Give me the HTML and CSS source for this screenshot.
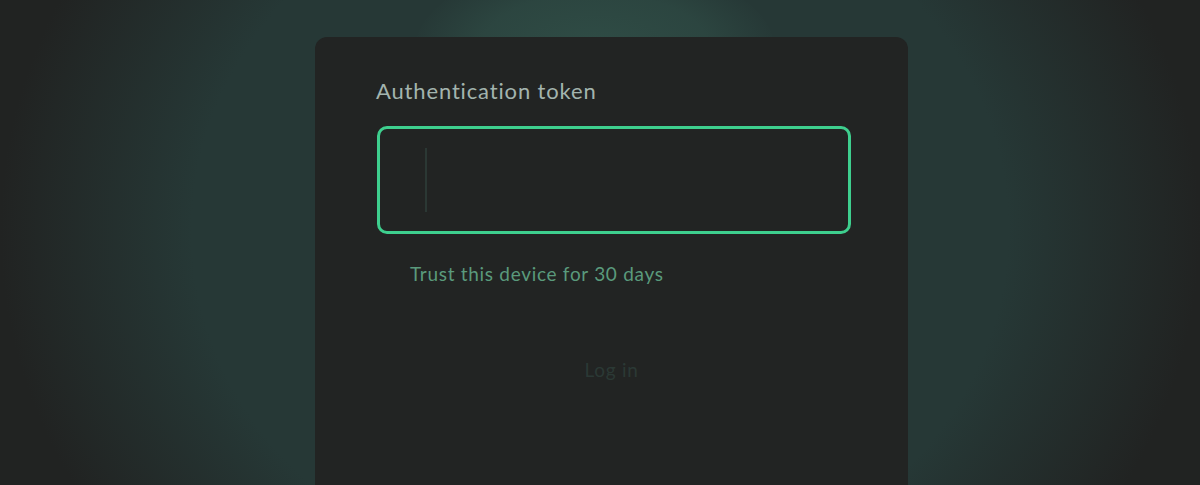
FILE: index.html
```html
<!DOCTYPE html>
<html lang="en">
<head>
<meta charset="utf-8">
<title>Authentication</title>
<link rel="stylesheet" href="styles.css">
</head>
<body>
<div class="page">
  <div class="glow"></div>
  <main class="card">
    <label class="label" for="token">Authentication token</label>
    <div class="input">
      <span class="caret"></span>
    </div>
    <div class="trust">Trust this device for 30 days</div>
    <button class="login">Log in</button>
  </main>
</div>
</body>
</html>
```

FILE: styles.css
```css
html, body {
  margin: 0;
  padding: 0;
  height: 100%;
  overflow: hidden;
}
body {
  background-color: #212322;
  background-image: radial-gradient(ellipse 600px 530px at 600px 230px, #263836 0%, #263836 68%, #212322 100%);
  font-family: "Lato", "Noto Sans", sans-serif;
}
.page {
  position: relative;
  display: flex;
  justify-content: center;
  padding-top: 37px;
  padding-left: 23px;
  height: 100%;
  box-sizing: border-box;
}
.glow {
  position: absolute;
  left: 415px;
  top: -40px;
  width: 360px;
  height: 180px;
  border-radius: 50%;
  background: radial-gradient(ellipse at center, rgba(80, 150, 125, 0.22) 0%, rgba(80, 150, 125, 0.14) 45%, rgba(80, 150, 125, 0) 72%);
}
.card {
  position: relative;
  width: 593px;
  box-sizing: border-box;
  background: #222423;
  border-radius: 12px 12px 0 0;
  padding: 40px 57px 0 62px;
  display: flex;
  flex-direction: column;
}
.label {
  display: block;
  font-size: 22px;
  line-height: 28px;
  letter-spacing: 0.85px;
  color: #a3b4ae;
  margin-left: -1px;
}
.input {
  margin-top: 21px;
  height: 108px;
  box-sizing: border-box;
  border: 3px solid #3ecf8e;
  border-radius: 10px;
  padding: 19px 0 0 45px;
}
.caret {
  display: block;
  width: 2px;
  height: 64px;
  background: #2b3834;
}
.trust {
  margin-top: 28px;
  margin-left: 33px;
  font-size: 19px;
  line-height: 24px;
  letter-spacing: 0.7px;
  color: #5a9a7c;
}
.login {
  align-self: center;
  margin-top: 71px;
  background: none;
  border: none;
  padding: 0;
  font-family: inherit;
  font-size: 19px;
  line-height: 26px;
  letter-spacing: 0.7px;
  color: #2b3935;
  margin-left: -5px;
}
```
